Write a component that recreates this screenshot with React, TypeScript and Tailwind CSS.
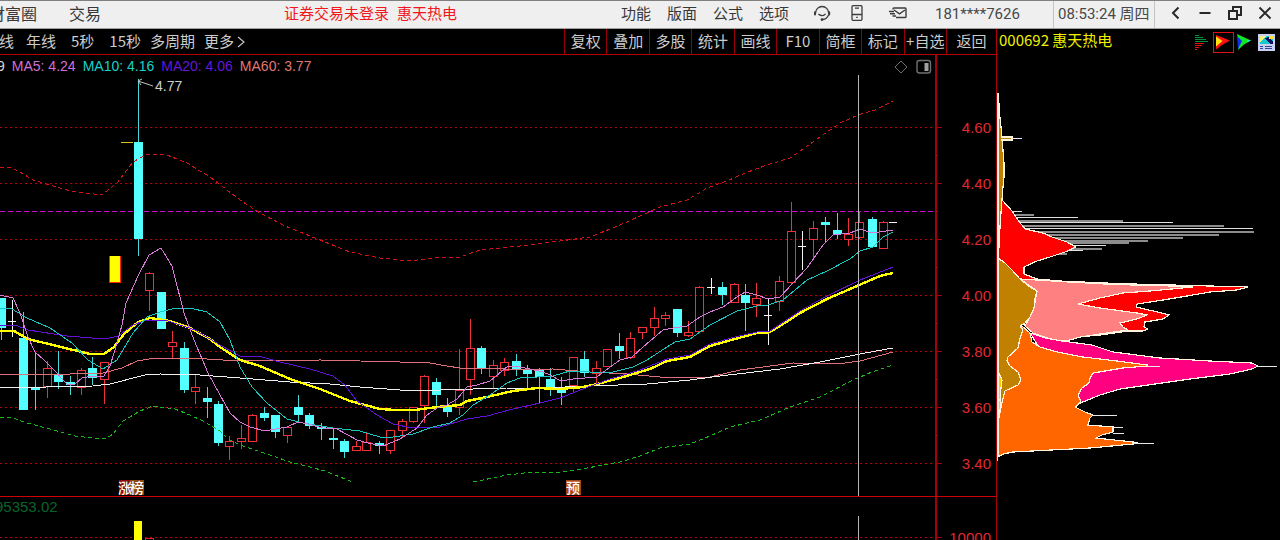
import React from "react";

type Kind = "up" | "down" | "flat";
type Candle = [x: number, open: number, close: number, high: number, low: number, kind: Kind];

const CANDLES: Candle[] = [
  [1, 298, 328, 298, 340, "down"],
  [12, 321, 321, 300, 337, "flat"],
  [23, 338, 410, 312, 410, "down"],
  [35, 387, 390, 352, 410, "down"],
  [47, 368, 386, 361, 398, "up"],
  [58, 374, 382, 351, 389, "down"],
  [70, 382, 385, 376, 395, "down"],
  [81, 370, 387, 368, 395, "up"],
  [92, 368, 378, 357, 385, "down"],
  [104, 362, 379, 362, 404, "up"],
  [138, 142, 239, 79, 256, "down"],
  [149, 273, 290, 272, 311, "up"],
  [161, 292, 329, 292, 329, "down"],
  [172, 342, 346, 331, 358, "up"],
  [184, 348, 390, 342, 393, "down"],
  [195, 387, 391, 375, 404, "up"],
  [207, 398, 402, 387, 418, "down"],
  [218, 404, 443, 401, 446, "down"],
  [229, 441, 446, 436, 460, "up"],
  [241, 438, 441, 425, 449, "up"],
  [252, 415, 441, 414, 441, "up"],
  [264, 413, 418, 407, 421, "down"],
  [275, 415, 432, 415, 438, "down"],
  [287, 427, 435, 426, 443, "up"],
  [298, 407, 415, 395, 421, "down"],
  [309, 415, 426, 413, 429, "down"],
  [321, 427, 429, 423, 440, "down"],
  [333, 438, 440, 428, 449, "down"],
  [344, 441, 452, 439, 458, "down"],
  [356, 446, 450, 441, 451, "up"],
  [366, 442, 450, 433, 451, "up"],
  [379, 443, 446, 441, 454, "down"],
  [390, 430, 450, 430, 454, "up"],
  [402, 421, 430, 419, 437, "up"],
  [413, 407, 421, 407, 423, "up"],
  [424, 376, 405, 375, 423, "up"],
  [436, 382, 395, 378, 407, "down"],
  [447, 406, 412, 398, 417, "down"],
  [459, 390, 407, 349, 415, "up"],
  [470, 348, 379, 319, 395, "up"],
  [481, 348, 369, 346, 374, "down"],
  [493, 365, 376, 360, 388, "up"],
  [504, 362, 370, 358, 376, "up"],
  [516, 361, 369, 354, 376, "down"],
  [527, 370, 374, 365, 388, "down"],
  [539, 370, 377, 368, 403, "down"],
  [550, 379, 388, 368, 396, "down"],
  [561, 390, 393, 377, 405, "down"],
  [573, 357, 385, 357, 393, "up"],
  [584, 359, 373, 351, 377, "down"],
  [596, 368, 373, 361, 384, "up"],
  [607, 349, 366, 349, 366, "up"],
  [619, 346, 351, 333, 359, "down"],
  [630, 338, 357, 332, 359, "up"],
  [642, 327, 332, 327, 339, "up"],
  [654, 318, 327, 307, 336, "up"],
  [665, 315, 318, 312, 326, "up"],
  [677, 309, 333, 309, 337, "down"],
  [688, 332, 335, 321, 337, "up"],
  [699, 287, 331, 286, 331, "up"],
  [711, 287, 287, 278, 294, "flat"],
  [722, 287, 295, 282, 305, "down"],
  [734, 284, 302, 283, 303, "up"],
  [745, 295, 303, 284, 331, "down"],
  [756, 298, 304, 283, 317, "up"],
  [768, 315, 315, 299, 345, "flat"],
  [779, 281, 301, 276, 311, "up"],
  [791, 231, 282, 202, 284, "up"],
  [802, 246, 246, 231, 270, "flat"],
  [813, 228, 239, 221, 258, "up"],
  [825, 222, 225, 217, 243, "down"],
  [837, 230, 234, 213, 239, "down"],
  [848, 234, 239, 218, 246, "up"],
  [859, 222, 237, 212, 239, "up"],
  [872, 219, 247, 217, 248, "down"],
  [883, 222, 248, 221, 248, "up"],
];

const UPPER_BAND =
  "0,168 10,167 20,172 33,180 43,183 70,191 102,195 118,182 133,162 147,154 167,155 187,163 210,177 240,200 260,213 285,226 320,240 350,252 380,258 410,261 440,257 460,257 480,250 520,246 560,241 590,237 620,225 660,207 687,200 707,188 727,181 745,173 767,165 790,158 810,144 840,123 858,115 875,110 893,101";
const LOWER_BAND_A =
  "0,418 10,417 27,423 50,429 75,436 93,438 105,439 113,434 123,421 140,411 153,406 175,409 190,415 205,422 220,431 228,439 240,445 270,455 290,462 310,467 325,471 340,477 352,482";
const LOWER_BAND_B =
  "473,482 507,475 533,472 563,472 587,468 620,462 640,456 660,448 690,444 710,436 730,427 760,420 790,407 820,397 853,380 872,372 893,365";
const MA5 =
  "0,295 13,298 20,313 28,337 35,352 44,360 55,371 62,379 68,385 75,384 82,378 92,376 104,376 110,366 115,350 122,325 126,303 138,276 149,255 161,248 172,266 184,313 194,340 208,373 220,395 230,413 240,422 250,427 265,431 287,427 298,422 308,424 323,428 337,429 357,440 368,443 383,446 400,439 417,428 427,415 437,408 447,405 457,399 467,387 477,385 490,381 508,366 520,367 530,369 543,372 550,375 561,381 573,379 597,377 610,367 620,360 632,357 643,347 663,330 673,328 687,326 700,317 710,312 723,307 737,297 745,292 757,295 768,299 780,297 793,283 807,268 823,245 833,235 850,233 860,229 872,233 893,230";
const MA10 =
  "0,308 12,309 27,318 50,328 72,343 88,360 103,369 117,360 133,333 147,317 160,312 172,309 190,308 207,312 220,322 230,340 240,367 252,387 267,403 287,419 303,423 333,428 360,431 380,437 393,437 413,434 433,427 450,423 463,415 473,405 490,395 507,383 520,378 537,377 553,376 570,371 590,372 613,372 633,367 647,360 667,347 675,342 690,339 710,325 737,311 757,306 768,305 783,300 807,280 827,271 850,259 860,251 873,247 883,237 893,232";
const MA20 =
  "0,325 15,325 28,330 67,336 105,339 118,336 133,325 147,320 165,320 195,330 220,345 240,356 262,357 280,362 310,369 333,376 345,385 357,401 377,415 393,424 412,428 440,427 467,419 487,416 513,409 540,403 560,398 583,389 607,380 640,370 667,359 690,355 710,344 735,337 757,332 770,331 800,311 827,296 860,280 893,267";
const MAIN_AVG =
  "0,331 14,331 28,339 57,346 90,354 104,354 114,347 124,334 138,322 150,318 170,321 190,328 210,339 220,347 240,360 260,366 290,379 320,389 350,401 380,409 395,410 415,410 437,407 460,405 467,401 487,397 513,391 537,388 560,389 583,387 597,384 620,378 650,369 667,361 690,357 710,346 735,339 757,333 768,333 780,326 800,313 827,299 857,286 880,276 893,273";
const LONG_AVG =
  "0,388 93,386 110,384 145,375 160,374 200,375 240,378 290,382 330,384 360,387 400,390 440,390 507,388 540,388 590,386 647,384 690,380 720,376 780,369 820,362 860,354 893,348";
const MA60 =
  "0,374 70,374 103,373 122,368 137,361 155,358 190,358 240,361 320,360 400,362 430,363 447,366 460,368 490,368 520,370 553,369 590,372 627,374 660,377 710,377 740,370 793,363 837,364 860,361 893,352";

const PRICES = ["4.60", "4.40", "4.20", "4.00", "3.80", "3.60", "3.40"];

const THIN_LINES: [y: number, end: number][] = [
  [211, 1022], [217, 1078], [222, 1173], [228, 1253], [245, 1106], [250, 1083],
];
const THICK_LINES: [y: number, end: number][] = [
  [214, 1034], [220, 1123], [225, 1224], [231, 1254], [234, 1219], [237, 1183], [240, 1148], [242, 1129],
  [248, 1102], [253, 1067],
];

const INDICATORS = [
  { text: "9", className: "-ml-[3px] text-[#d8d8d8]" },
  { text: "MA5: 4.24", className: "text-[#d070d8]" },
  { text: "MA10: 4.16", className: "text-[#18d0c8]" },
  { text: "MA20: 4.06", className: "text-[#6418d8]" },
  { text: "MA60: 3.77", className: "text-[#e07870]" },
];

const TOOLS = ["复权", "叠加", "多股", "统计", "画线", "F10", "简框", "标记", "+自选"];

function CandleMark({ candle }: { candle: Candle }) {
  const [x, top, bottom, high, low, kind] = candle;
  const c = x + 0.5;
  if (kind === "down") {
    return (
      <g fill="#54ffff">
        <rect x={x} y={high} width="1" height={low - high} opacity="0.85" />
        <rect x={x - 4} y={top} width="9" height={bottom - top} />
      </g>
    );
  }
  if (kind === "flat") {
    return <path d={`M${c} ${high}V${low}M${x - 4} ${top + 0.5}H${x + 4}`} stroke="#f4f4f4" fill="none" />;
  }
  return (
    <path
      d={`M${c} ${high}V${top}M${c} ${bottom}V${low}M${x - 3.5} ${top + 0.5}H${x + 4.5}V${bottom + 0.5}H${x - 3.5}Z`}
      stroke="#f03038"
      fill="none"
    />
  );
}

function PriceChart() {
  return (
    <svg viewBox="0 55 997 485" className="block h-auto w-full" shapeRendering="crispEdges" role="img" aria-label="K线图">
      <g stroke="#b80010" strokeDasharray="2 3" shapeRendering="auto">
        {PRICES.map((p, i) => (
          <path key={p} d={`M0 ${127.5 + i * 56}H935`} />
        ))}
        <path d="M0 537.5H935" />
      </g>
      <path d="M0 211.5H935" stroke="#d010d0" strokeDasharray="5 3" shapeRendering="auto" />

      <g stroke="#a80008">
        <path d="M935.5 55V540" strokeWidth="2" />
        <path d="M0 496.5H997" strokeWidth="1" stroke="#d00008" />
        <path d="M996.5 55V540" />
        {PRICES.map((p, i) => (
          <path key={p} d={`M936 ${127.5 + i * 56}H942${i < 6 ? `M936 ${155.5 + i * 56}H938` : ""}`} />
        ))}
        <path d="M936 537.5H942" />
      </g>
      <g fill="#e02830" fontSize="15" textAnchor="end" className="font-['Liberation_Sans',sans-serif]">
        {PRICES.map((p, i) => (
          <text key={p} x="991" y={133 + i * 56}>{p}</text>
        ))}
        <text x="991" y="543">10000</text>
      </g>

      <rect x="109" y="256" width="12" height="27" fill="#ff2000" />
      <rect x="110" y="256" width="10" height="26" fill="#ffff00" />
      <path d="M121 142.5H133" stroke="#d8c020" />

      {CANDLES.map((c) => (
        <CandleMark key={c[0]} candle={c} />
      ))}
      <path d="M889 222.5H897" stroke="#f4f4f4" />

      <g fill="none">
        <polyline points={UPPER_BAND} stroke="#d01418" strokeDasharray="4 3" />
        <polyline points={LOWER_BAND_A} stroke="#18b818" strokeDasharray="4 3" />
        <polyline points={LOWER_BAND_B} stroke="#18b818" strokeDasharray="4 3" />
        <polyline points={MA60} stroke="#e07078" />
        <polyline points={LONG_AVG} stroke="#f0f0f0" />
        <polyline points={MAIN_AVG} stroke="#ffff00" strokeWidth="2.4" />
        <polyline points={MA20} stroke="#6010d8" />
        <polyline points={MA10} stroke="#18c8c0" />
        <polyline points={MA5} stroke="#d878d8" />
      </g>

      <path d="M858.5 75V496M858.5 516V540" stroke="#b8b8b8" />

      <path d="M153 86L138 81M142 79L138 81L141 85" stroke="#c0c0c0" fill="none" shapeRendering="auto" />
      <text x="155" y="91" fontSize="14" fill="#d0d0d0" className="font-['Liberation_Sans',sans-serif]">4.77</text>

      <g shapeRendering="auto" fill="none" stroke="#707070">
        <path d="M901 61L907 67L901 73L895 67Z" />
        <rect x="917" y="60.5" width="13.5" height="12.5" rx="2.5" strokeWidth="1.4" />
        <rect x="924.5" y="63" width="4" height="8" fill="#a0a0a0" stroke="none" />
      </g>

      <rect x="119" y="480" width="11" height="15" fill="#880c10" />
      <rect x="130" y="480" width="14" height="15" fill="#8c4610" />
      <rect x="566" y="480" width="15" height="15" fill="#a84410" />
      <g fill="#ffffff" fontSize="14" fontWeight="500" className="font-['Noto_Sans_CJK_SC',sans-serif]">
        <text x="118" y="493">涨</text>
        <text x="130" y="493">榜</text>
        <text x="566" y="493">预</text>
      </g>

      <text x="-5" y="512" fontSize="15" fill="#08642c" className="font-['Liberation_Sans',sans-serif]">95353.02</text>
      <rect x="134" y="521" width="8" height="19" fill="#ffff00" />
      <path d="M145.5 541V538.5H153.5V541" stroke="#d82028" fill="none" />
    </svg>
  );
}

function ChipChart() {
  return (
    <svg viewBox="997 55 283 485" className="block h-auto w-full" shapeRendering="crispEdges" role="img" aria-label="筹码分布">
      {THICK_LINES.map(([y, end]) => (
        <rect key={y} x="1010" y={y} width={end - 1010} height="2" fill="#8c8c8c" />
      ))}
      {THIN_LINES.map(([y, end]) => (
        <rect key={y} x="1010" y={y} width={end - 1010} height="1" fill="#e0e0e0" />
      ))}
      <g stroke="#fff4e0" strokeWidth="1.2">
        <path
          d="M1001 198L1003 201L1012 211L1018 220L1025 229L1043 233L1052 237L1067 242L1076 247L1065 252L1050 257L1037 261L1024 267V274L1037 279L1060 281L1105 283L1133 284L1210 286L1248 287L1237 290L1210 292L1187 296L1163 300L1137 304L1136 307L1153 311L1169 315L1163 319L1145 322L1144 327L1148 329L1143 331H1128L1100 335L1077 337L1070 340L1025 326L1020 280L998 258Z"
          fill="#ff0000"
        />
        <path
          d="M1020 279L1037 280L1060 281.5L1105 284L1133 285L1172 286L1193 287L1150 291L1123 293L1100 298L1078 304L1100 308L1137 313L1147 315L1137 319L1120 323L1123 327L1128 330L1100 334L1080 337L1070 340L1060 341L1047 338L1033 333L1025 326L1030 317L1034 308L1037 291Z"
          fill="#ff8080"
        />
        <path
          d="M1030 333L1045 338L1062 341L1092 345L1113 352L1160 358L1210 361L1252 363L1258 366L1252 369L1230 374L1190 379L1120 389L1100 395L1078 404L1060 380Z"
          fill="#ff0080"
        />
        <path
          d="M998 330L1022 326L1030 333L1032 342L1040 347L1057 352L1083 357L1117 361L1147 365V366L1123 368L1093 373L1090 378L1089 383L1082 388L1078 395L1081 402L1075 407L1085 412L1093 415L1090 418L1088 425L1113 427V432L1102 435L1096 438L1133 442L1138 443L1133 444L1090 448L1013 452L1003 454L998 457Z"
          fill="#ff6600"
        />
        <path
          d="M998 93L999 104L1000 118L1001 127L1002 137H1012V140H1002L1003 150L1004 163V177L1003 187L1002 200L1001 213L1000 227L999 247L998 258L1005 263L1012 270L1020 279L1030 287L1037 291L1035 298L1034 308L1030 317L1025 323L1020 326L1023 330L1020 338L1018 348L1008 357L1007 361L1010 366L1018 372L1021 380L1018 385L1005 391L1002 403L999 417L998 430Z"
          fill="#c08000"
        />
        <path d="M998 371L1002 380L1001 388L1000 400L1001 405L999 415L998 440Z" fill="#ffcc00" />
      </g>
      <g stroke="#e8e8e8">
        <path d="M1012 138.5H1022M1258 366.5H1277M1147 366.5H1160M1093 415.5H1117M1113 427.5H1123M1113 433.5H1124M1133 443.5H1154" />
        <path d="M997.5 93V461" />
      </g>
    </svg>
  );
}

function HeadsetIcon() {
  return (
    <svg width="18" height="18" viewBox="0 0 18 18" fill="none" stroke="#3c3c3c" strokeWidth="1.3" strokeLinecap="round">
      <path d="M2.6 9A6.5 6.5 0 0 1 15.6 9" />
      <path d="M2 8.2V10.6M16.2 8.2V10.6" strokeWidth="2" />
      <path d="M15.4 11.2Q13.8 15 9.8 15.5" />
      <path d="M5.8 10.4Q9.2 12.8 12.2 10.2" />
      <circle cx="9" cy="15.6" r="0.8" fill="#3c3c3c" />
    </svg>
  );
}

function PhoneIcon() {
  return (
    <svg width="16" height="18" viewBox="0 0 16 18" fill="none" stroke="#3c3c3c" strokeWidth="1.3">
      <rect x="3" y="1.7" width="10" height="14.6" rx="1" />
      <path d="M3 10.5H13M6 4.2H10M7.2 13.4H8.8" />
    </svg>
  );
}

function MailIcon() {
  return (
    <svg width="20" height="16" viewBox="0 0 20 16" fill="none" stroke="#3c3c3c" strokeWidth="1.4">
      <path d="M5 4.5V3.8Q5 3 5.8 3H17.2Q18 3 18 3.8V11.7Q18 12.5 17.2 12.5H8" />
      <path d="M6 5L11.5 8.8L17 5" />
      <path d="M1 6.5H6M2 8.8H7M4.5 11H8" strokeWidth="1.6" />
    </svg>
  );
}

function BarsIcon() {
  return (
    <svg width="14" height="17" viewBox="0 0 14 17" fill="none">
      <path d="M0 1.5H4M0 3.5H8M0 5.5H11M0 7.5H13" stroke="#089038" />
      <path d="M0 9.5H9M0 11.5H7M0 13.5H4M0 15.5H2" stroke="#e81018" />
    </svg>
  );
}

function RedArrowIcon() {
  return (
    <svg width="19" height="19" viewBox="0 0 19 19">
      <path d="M2 2L16 7.5L8 12L2 16.5V10L5 8.5L2 7Z" fill="#ff1010" />
      <path d="M2 3.5L8.5 8L2 13.5Z" fill="#ffe010" />
    </svg>
  );
}

function GreenArrowIcon() {
  return (
    <svg width="16" height="18" viewBox="0 0 16 18">
      <path d="M1 1L15 7.5L8 11.5L2 17L3 11Z" fill="#10e820" />
      <path d="M1 3L6 8L2 16Z" fill="#1030f0" />
      <path d="M11 6.4L15 7.5L11 9.2Z" fill="#20e0e0" />
    </svg>
  );
}

function PictureIcon() {
  return (
    <svg width="17" height="17" viewBox="0 0 17 17" shapeRendering="crispEdges">
      <rect width="17" height="17" fill="#c8d0f0" />
      <rect x="2" y="2" width="13" height="8" fill="#18c8d0" />
      <path d="M2 2H8L5 6L2 8Z" fill="#f0f080" />
      <path d="M7 4L10 3L15 8V10H12Z" fill="#101060" />
      <rect x="11" y="2" width="4" height="3" fill="#ffe030" />
      <path d="M2 12.5H5M7 12.5H14M2 14.5H5M7 14.5H14" stroke="#3040a0" />
    </svg>
  );
}

const iconButton = "flex h-full w-[30px] items-center justify-center";

function TopBar() {
  return (
    <header className="flex h-[29px] items-stretch overflow-hidden border-t border-b border-t-[#808080] border-b-[#a0a0a0] bg-[#efefef] text-[15px] whitespace-nowrap text-[#383838]">
      <nav className="-ml-[11px] flex items-center gap-8 pb-[3px] text-base">
        <button type="button">财富圈</button>
        <button type="button">交易</button>
      </nav>
      <p className="ml-[183px] flex items-center gap-2 pb-[3px] text-[#f01820]">
        <span>证券交易未登录</span>
        <span>惠天热电</span>
      </p>
      <nav className="ml-auto flex items-center gap-4 pb-[3px]">
        <button type="button">功能</button>
        <button type="button">版面</button>
        <button type="button">公式</button>
        <button type="button">选项</button>
      </nav>
      <div className="ml-[18px] flex items-center gap-[5px] pb-[3px]">
        <button type="button" aria-label="客服" className={iconButton}><HeadsetIcon /></button>
        <button type="button" aria-label="手机" className={iconButton}><PhoneIcon /></button>
        <button type="button" aria-label="邮件" className="ml-[6px] flex h-full w-[30px] items-center justify-center"><MailIcon /></button>
      </div>
      <div className="flex w-[140px] items-center justify-start pl-[22px] font-['Roboto',sans-serif] text-[#484848]">181****7626</div>
      <time className="flex w-[101px] items-center gap-1 border-l border-[#c4c4c4] pl-1 font-['Roboto','Noto_Sans_CJK_SC',sans-serif] text-[#484848]">
        08:53:24 周四
      </time>
      <div className="flex items-center border-l border-[#c4c4c4] pb-[3px] pl-[5px] text-[#282828]">
        <button type="button" aria-label="返回" className={iconButton}>
          <svg width="14" height="14" viewBox="0 0 14 14" fill="none" stroke="currentColor" strokeWidth="2"><path d="M10.5 1.5L5 7L10.5 12.5" /></svg>
        </button>
        <button type="button" aria-label="最小化" className={iconButton}>
          <svg width="14" height="14" viewBox="0 0 14 14" fill="none" stroke="currentColor" strokeWidth="2"><path d="M1.5 7H12.5" /></svg>
        </button>
        <button type="button" aria-label="还原" className={iconButton}>
          <svg width="16" height="16" viewBox="0 0 16 16" fill="none" stroke="currentColor" strokeWidth="2"><path d="M2 6H10V14H2ZM6 5V2H14V10H11" /></svg>
        </button>
        <button type="button" aria-label="关闭" className={iconButton}>
          <svg width="14" height="14" viewBox="0 0 14 14" fill="none" stroke="currentColor" strokeWidth="1.8"><path d="M1.5 1.5L12.5 12.5M12.5 1.5L1.5 12.5" /></svg>
        </button>
      </div>
    </header>
  );
}

function Toolbar() {
  return (
    <div className="flex h-[26px] justify-between overflow-hidden border-r border-b border-[#b00008] text-[15px] whitespace-nowrap text-[#cccccc]">
      <div className="-ml-px flex items-center gap-[15px]">
        <div className="flex gap-3">
          <button type="button">线</button>
          <button type="button">年线</button>
        </div>
        <button type="button">5秒</button>
        <div className="flex gap-[9px]">
          <button type="button">15秒</button>
          <button type="button">多周期</button>
          <button type="button" className="flex items-center gap-[3px]">
            更多
            <svg width="8" height="12" viewBox="0 0 8 12" fill="none" stroke="currentColor" strokeWidth="1.1"><path d="M1 1L7 6L1 11" /></svg>
          </button>
        </div>
      </div>
      <div className="flex">
        <div className="grid w-[382px] grid-cols-9">
          {TOOLS.map((t) => (
            <button key={t} type="button" className="border-l border-[#980008] text-center">{t}</button>
          ))}
        </div>
        <button type="button" className="w-[50px] border-l border-[#980008] text-center">返回</button>
      </div>
    </div>
  );
}

export default function App() {
  return (
    <div className="min-h-screen overflow-hidden bg-black font-['Noto_Sans_CJK_SC',sans-serif]">
      <TopBar />
      <main className="grid grid-cols-[minmax(0,1fr)_283px]">
        <section>
          <Toolbar />
          <div className="relative">
            <PriceChart />
            <div className="absolute top-0 left-0 flex h-[22px] items-center gap-[7px] font-['Liberation_Sans',sans-serif] text-sm whitespace-nowrap">
              {INDICATORS.map((m) => (
                <span key={m.text} className={m.className}>{m.text}</span>
              ))}
            </div>
          </div>
        </section>
        <section>
          <div className="flex h-[26px] items-center justify-between pr-[5px] pl-[2px]">
            <h1 className="pb-[3px] text-[15px] whitespace-nowrap text-[#f0f000]">000692 惠天热电</h1>
            <div className="flex items-center gap-[2px]">
              <button type="button" aria-label="筹码" className="mr-0.5"><BarsIcon /></button>
              <button type="button" aria-label="火焰山" className="border border-[#e01018]"><RedArrowIcon /></button>
              <button type="button" aria-label="活跃度"><GreenArrowIcon /></button>
              <button type="button" aria-label="设置" className="ml-1"><PictureIcon /></button>
            </div>
          </div>
          <ChipChart />
        </section>
      </main>
    </div>
  );
}
